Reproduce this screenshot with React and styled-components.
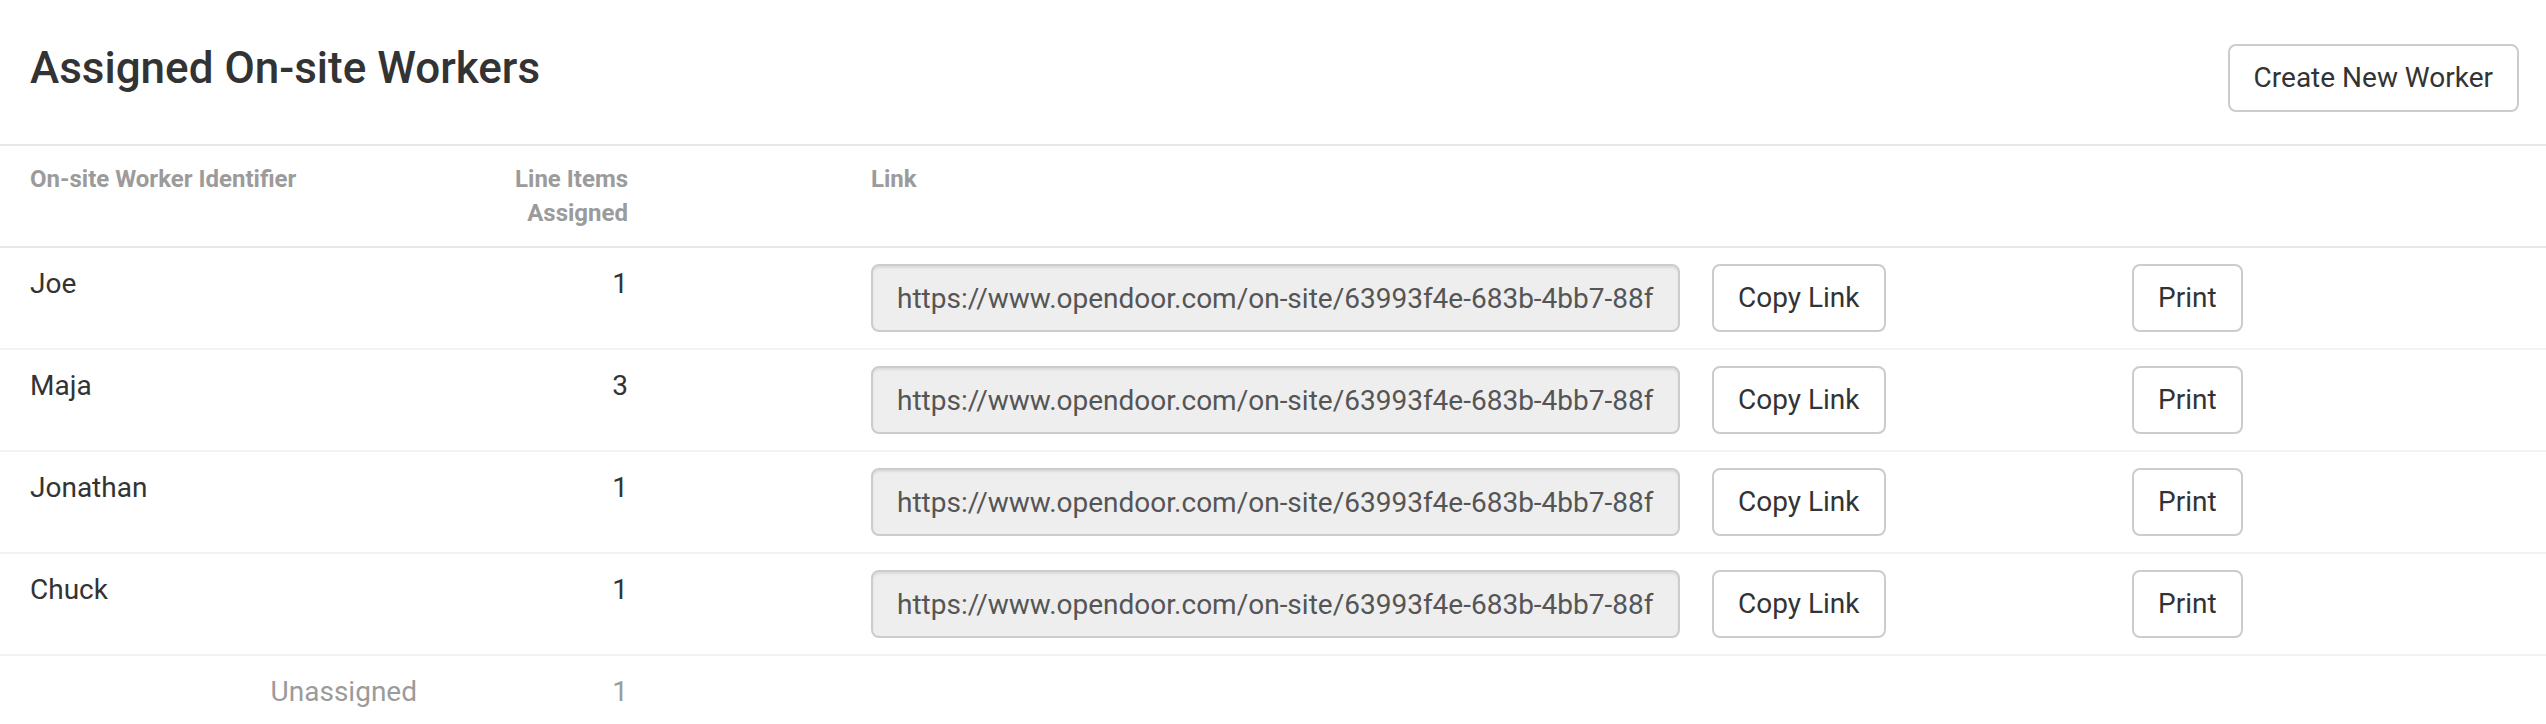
import React from 'react';
import styled, { createGlobalStyle } from 'styled-components';

const LINK = 'https://www.opendoor.com/on-site/63993f4e-683b-4bb7-88f';

const workers = [
  { name: 'Joe', count: 1 },
  { name: 'Maja', count: 3 },
  { name: 'Jonathan', count: 1 },
  { name: 'Chuck', count: 1 },
];

const App = () => {
  return (
    <>
      <GlobalStyle />
      <PAGE>
        <HEADER>
          <TITLE>Assigned On-site Workers</TITLE>
          <BUTTON>Create New Worker</BUTTON>
        </HEADER>
        <ROW head>
          <TH>On-site Worker Identifier</TH>
          <TH right>Line Items Assigned</TH>
          <TH />
          <TH>Link</TH>
          <TH />
          <TH />
        </ROW>
        {workers.map((w) => (
          <ROW key={w.name}>
            <TD>{w.name}</TD>
            <TD right>{w.count}</TD>
            <TD />
            <TD>
              <LINKINPUT type="text" value={LINK} readOnly disabled />
            </TD>
            <TD>
              <BUTTON>Copy Link</BUTTON>
            </TD>
            <TD>
              <BUTTON>Print</BUTTON>
            </TD>
          </ROW>
        ))}
        <ROW last>
          <TD right muted>Unassigned</TD>
          <TD right muted>1</TD>
        </ROW>
      </PAGE>
    </>
  );
};

const GlobalStyle = createGlobalStyle`
  body {
    margin: 0;
    background: #fff;
    font-family: Roboto, 'Liberation Sans', sans-serif;
    color: #333;
  }
`;

const PAGE = styled.div`
  width: 100%;
`;

const HEADER = styled.div`
  display: flex;
  justify-content: space-between;
  align-items: flex-start;
  padding: 44px 27px 32px 30px;
  border-bottom: 2px solid #e8e8e8;
`;

const TITLE = styled.h3`
  margin: 0;
  font-size: 44px;
  font-weight: 500;
  line-height: 1.1;
  color: #333;
`;

const BUTTON = styled.button`
  display: inline-block;
  height: 68px;
  padding: 12px 24px;
  border: 2px solid #ccc;
  border-radius: 8px;
  background: #fff;
  color: #333;
  font-family: Roboto, 'Liberation Sans', sans-serif;
  font-size: 28px;
  line-height: 40px;
  white-space: nowrap;
  cursor: pointer;
`;

const ROW = styled.div`
  display: grid;
  grid-template-columns: 433px 211px 211px 841px 420px 1fr;
  border-bottom: ${(p) => (p.last ? 'none' : p.head ? '2px solid #e8e8e8' : '2px solid #f2f2f2')};
`;

const TH = styled.div`
  padding: 16px;
  font-size: 24px;
  font-weight: 700;
  line-height: 34px;
  color: #9b9b9b;
  text-align: ${(p) => (p.right ? 'right' : 'left')};

  &:first-child {
    padding-left: 30px;
  }
`;

const TD = styled.div`
  padding: 16px;
  font-size: 28px;
  line-height: 40px;
  color: ${(p) => (p.muted ? '#9b9b9b' : '#333')};
  text-align: ${(p) => (p.right ? 'right' : 'left')};

  &:first-child {
    padding-left: 30px;
  }
`;

const LINKINPUT = styled.input`
  display: block;
  box-sizing: border-box;
  width: 100%;
  height: 68px;
  padding: 12px 24px;
  border: 2px solid #ccc;
  border-radius: 8px;
  background: #eee;
  box-shadow: inset 0 2px 2px rgba(0, 0, 0, 0.075);
  color: #555;
  -webkit-text-fill-color: #555;
  opacity: 1;
  font-family: Roboto, 'Liberation Sans', sans-serif;
  font-size: 28px;
  line-height: 40px;
  outline: none;
`;

export default App;
